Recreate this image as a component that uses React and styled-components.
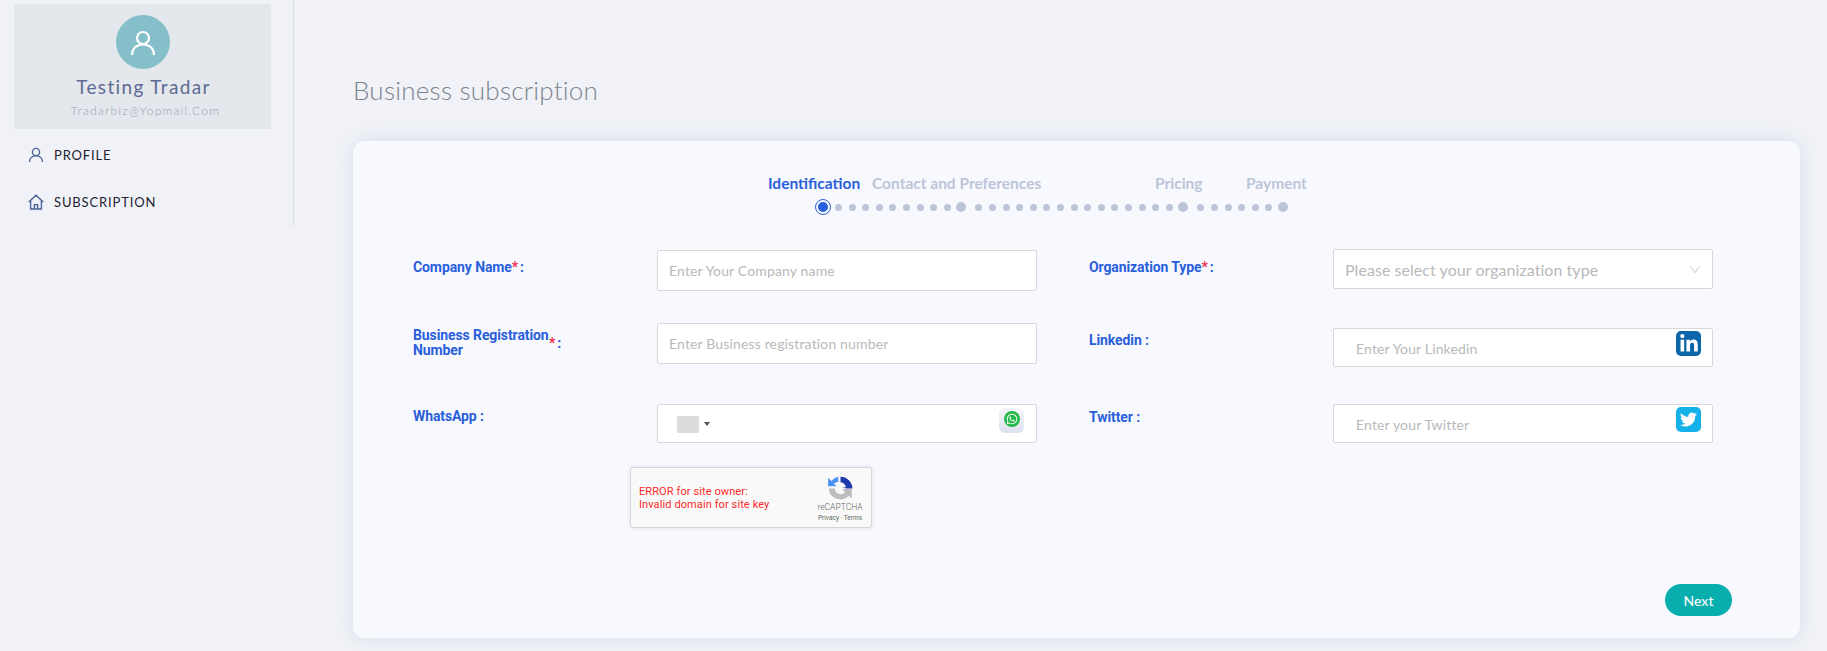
import React from 'react'
import styled, { createGlobalStyle } from 'styled-components'
import { FaWhatsapp, FaLinkedinIn, FaTwitter } from 'react-icons/fa'

const GlobalStyle = createGlobalStyle`
  html, body {
    margin: 0;
    background: #f0f2f7;
    font-family: "Lato", "Open Sans", sans-serif;
  }
  * { box-sizing: border-box; }
`

const Page = styled.div`
  display: flex;
  align-items: flex-start;
  width: 100%;
  height: 651px;
  overflow: hidden;
`

const Sidebar = styled.aside`
  width: 294px;
  height: 226px;
  flex: none;
  padding: 4px 22px 0 14px;
  border-right: 1px solid #d9dde6;
`

const ProfileBox = styled.div`
  height: 125px;
  padding-top: 11px;
  background: #e4e7ec;
  display: flex;
  flex-direction: column;
  align-items: center;
`

const Avatar = styled.div`
  width: 54px;
  height: 54px;
  border-radius: 50%;
  background: #85bfc9;
  display: flex;
  align-items: center;
  justify-content: center;
`

const UserName = styled.div`
  margin: 7px 0 0 2px;
  font-size: 19px;
  line-height: 22px;
  letter-spacing: 1.35px;
  color: #5d6b92;
`

const UserMail = styled.div`
  margin: 5px 0 0 6px;
  font-size: 12px;
  line-height: 15px;
  font-weight: 300;
  letter-spacing: 1.25px;
  color: #98a5b9;
`

const Menu = styled.nav`
  display: flex;
  flex-direction: column;
  gap: 29px;
  padding: 17px 0 0 14px;
`

const MenuItem = styled.a`
  display: flex;
  align-items: center;
  gap: 10px;
  height: 18px;
  font-size: 13px;
  letter-spacing: 0.85px;
  color: #1c2230;
`

const MenuIcon = styled.svg`
  width: 16px;
  height: 16px;
  flex: none;
  fill: none;
  stroke: #4d6496;
  stroke-width: 1.4;
`

const Main = styled.main`
  flex: 1;
  padding: 73px 27px 0 59px;
`

const Title = styled.h1`
  margin: 0 0 33px 0;
  font-size: 26px;
  line-height: 35px;
  font-weight: 300;
  letter-spacing: 0.25px;
  color: #7d838e;
`

const Card = styled.section`
  height: 497px;
  padding: 33px 60px 0;
  background: #f8f9fe;
  border-radius: 12px;
  box-shadow: 0 0 20px rgba(70, 90, 130, 0.13);
  position: relative;
  display: flex;
  flex-direction: column;
`

const StepLabels = styled.div`
  display: grid;
  grid-template-columns: 104px 283px 91px auto;
  padding-left: 355px;
`

const StepLabel = styled.span`
  font-size: 15.5px;
  line-height: 18px;
  font-weight: 700;
  white-space: nowrap;
  color: ${p => (p.$active ? '#2a5fdc' : '#bcc5d8')};
`

const Track = styled.div`
  display: flex;
  align-items: center;
  gap: 9.5px;
  height: 16px;
  margin-top: 7px;
  padding-left: 402px;
`

const Segment = styled.div`
  display: flex;
  align-items: center;
  gap: 6.6px;
`

const Dot = styled.span`
  width: 7px;
  height: 7px;
  border-radius: 50%;
  background: #bcc5d8;
`

const BigDot = styled.span`
  width: 10px;
  height: 10px;
  margin-left: -1.4px;
  border-radius: 50%;
  background: #bcc5d8;
`

const ActiveDot = styled.span`
  width: 16px;
  height: 16px;
  margin-right: -2.6px;
  border-radius: 50%;
  border: 1px solid #2a5fdc;
  display: flex;
  align-items: center;
  justify-content: center;
  &::after {
    content: '';
    width: 10px;
    height: 10px;
    border-radius: 50%;
    background: #2a5fdc;
  }
`

const Columns = styled.div`
  display: grid;
  grid-template-columns: 624px 624px;
  column-gap: 52px;
  margin-top: 35px;
  align-items: start;
`

const Column = styled.div`
  display: flex;
  flex-direction: column;
  margin-top: ${p => p.$top || 0}px;
`

const Row = styled.div`
  display: grid;
  grid-template-columns: 244px 380px;
  margin-top: ${p => p.$top || 0}px;
  height: ${p => p.$h || 39}px;
`

const Label = styled.label`
  display: flex;
  align-items: ${p => (p.$center ? 'center' : 'flex-start')};
  align-self: start;
  gap: 2px;
  padding-top: ${p => p.$pt || 0}px;
  font-family: "Roboto", sans-serif;
  font-size: 14px;
  line-height: 15px;
  font-weight: 700;
  letter-spacing: -0.1px;
  color: #2a5fdc;
`

const LabelText = styled.span`
  width: ${p => (p.$w ? `${p.$w}px` : 'auto')};
  white-space: ${p => (p.$w ? 'normal' : 'nowrap')};
`

const Star = styled.em`
  font-style: normal;
  color: #f0314f;
  margin-left: -2px;
`

const FieldBox = styled.div`
  position: relative;
  height: 100%;
  background: #fff;
  border: 1px solid #d6d8dc;
  border-radius: 2px;
`

const TextInput = styled.input`
  width: 100%;
  height: 100%;
  padding: ${p => (p.$shift ? 1 : 0)}px ${p => (p.$wide ? 40 : 12)}px 0 ${p => (p.$wide ? 22 : 11)}px;
  border: 0;
  outline: 0;
  background: transparent;
  font-family: "Lato", sans-serif;
  font-size: 14px;
  letter-spacing: 0.15px;
  color: #333;
  &::placeholder {
    color: #b9b9bb;
    opacity: 1;
  }
`

const SelectBox = styled.div`
  height: 100%;
  padding: 0 12px 0 11px;
  display: flex;
  align-items: center;
  justify-content: space-between;
  font-size: 16px;
  letter-spacing: 0.05px;
  color: #b9b9bb;
`

const Flag = styled.span`
  position: absolute;
  left: 19px;
  top: 11px;
  width: 22px;
  height: 17px;
  border-radius: 1px;
  background: #dcdcdc;
`

const FlagArrow = styled.span`
  position: absolute;
  left: 46px;
  top: 17px;
  border-left: 3px solid transparent;
  border-right: 3px solid transparent;
  border-top: 4px solid #555;
`

const SocialTile = styled.span`
  position: absolute;
  right: 11px;
  top: 2px;
  width: 25px;
  height: 25px;
  border-radius: 5px;
  display: flex;
  align-items: center;
  justify-content: center;
  background: ${p => p.$bg};
  color: #fff;
  font-size: ${p => p.$size}px;
`

const WhatsAppTile = styled.span`
  position: absolute;
  right: 12px;
  top: 3px;
  width: 25px;
  height: 25px;
  border-radius: 6px;
  display: flex;
  align-items: center;
  justify-content: center;
  background: linear-gradient(#f4f5f8, #dde2ee);
`

const WhatsAppDisc = styled.span`
  width: 16px;
  height: 16px;
  margin-top: -3px;
  border-radius: 50%;
  background: #25b84a;
  color: #fff;
  display: flex;
  align-items: center;
  justify-content: center;
  font-size: 12px;
`

const Captcha = styled.div`
  width: 242px;
  height: 61px;
  margin: 24px 0 0 217px;
  padding: 0 0 0 8px;
  background: #f9f9f9;
  border: 1px solid #d6d6d6;
  border-radius: 3px;
  box-shadow: 0 0 4px rgba(0, 0, 0, 0.1);
  display: flex;
  align-items: center;
  justify-content: space-between;
  font-family: "Roboto", sans-serif;
`

const CaptchaError = styled.div`
  font-size: 11px;
  line-height: 13px;
  letter-spacing: 0.1px;
  color: #fa2a2a;
`

const CaptchaBrand = styled.div`
  width: 62px;
  display: flex;
  flex-direction: column;
  align-items: center;
  margin-top: 3px;
  color: #666;
`

const BrandName = styled.div`
  font-size: 8.5px;
  line-height: 11px;
  font-weight: 300;
`

const BrandLinks = styled.div`
  font-size: 6.5px;
  line-height: 10px;
`

const NextButton = styled.button`
  position: absolute;
  right: 68px;
  bottom: 22px;
  width: 67px;
  height: 32px;
  border: 0;
  border-radius: 16px;
  background: #08adad;
  color: #fff;
  font-family: "Lato", sans-serif;
  font-size: 14px;
  font-weight: 500;
`

const dots = n => Array.from({ length: n }, (_, i) => <Dot key={i} />)

const App = () => {
  return (
    <Page>
      <GlobalStyle />
      <Sidebar>
        <ProfileBox>
          <Avatar>
            <svg width="26" height="28" viewBox="0 0 26 28" fill="none" stroke="#fff" strokeWidth="2.2">
              <circle cx="13" cy="10" r="6" />
              <path d="M2 27c0-6.500 4.500-10.500 11-10.500S24 20.500 24 27" />
            </svg>
          </Avatar>
          <UserName>Testing Tradar</UserName>
          <UserMail>Tradarbiz@Yopmail.Com</UserMail>
        </ProfileBox>
        <Menu>
          <MenuItem>
            <MenuIcon viewBox="0 0 16 16">
              <circle cx="8" cy="5" r="3.600" />
              <path d="M1.500 15c0-3.800 2.800-6.200 6.500-6.200s6.500 2.400 6.500 6.200" />
            </MenuIcon>
            PROFILE
          </MenuItem>
          <MenuItem>
            <MenuIcon viewBox="0 0 16 16">
              <path d="M.8 8 8 1.200 15.200 8M2.600 6.800V15h10.800V6.800M6.400 15v-4.400h3.200V15" />
            </MenuIcon>
            SUBSCRIPTION
          </MenuItem>
        </Menu>
      </Sidebar>

      <Main>
        <Title>Business subscription</Title>
        <Card>
          <StepLabels>
            <StepLabel $active>Identification</StepLabel>
            <StepLabel>Contact and Preferences</StepLabel>
            <StepLabel>Pricing</StepLabel>
            <StepLabel>Payment</StepLabel>
          </StepLabels>
          <Track>
            <Segment>
              <ActiveDot />
              {dots(9)}
              <BigDot />
            </Segment>
            <Segment>
              {dots(15)}
              <BigDot />
            </Segment>
            <Segment>
              {dots(6)}
              <BigDot />
            </Segment>
          </Track>

          <Columns>
            <Column>
              <Row $h={41}>
                <Label $pt={10}>
                  <LabelText>Company Name</LabelText>
                  <Star>*</Star> :
                </Label>
                <FieldBox>
                  <TextInput placeholder="Enter Your Company name" />
                </FieldBox>
              </Row>
              <Row $top={32} $h={41}>
                <Label $pt={5} $center>
                  <LabelText $w={136}>Business Registration Number</LabelText>
                  <Star>*</Star> :
                </Label>
                <FieldBox>
                  <TextInput placeholder="Enter Business registration number" />
                </FieldBox>
              </Row>
              <Row $top={40}>
                <Label $pt={5}>WhatsApp :</Label>
                <FieldBox>
                  <Flag />
                  <FlagArrow />
                  <WhatsAppTile>
                    <WhatsAppDisc>
                      <FaWhatsapp />
                    </WhatsAppDisc>
                  </WhatsAppTile>
                </FieldBox>
              </Row>
              <Captcha>
                <CaptchaError>
                  ERROR for site owner:
                  <br />
                  Invalid domain for site key
                </CaptchaError>
                <CaptchaBrand>
                  <svg width="27" height="27" viewBox="0 0 24 24">
                    <path d="M12 1.500A10.500 10.500 0 0 0 3.900 5.300L1 2.500V10h7.500L6 7.500A7 7 0 0 1 10 6.200V1.700z" fill="#4a90f5" />
                    <path d="M12 1.500a10.500 10.500 0 0 1 10.500 10.500H17A5.500 5.500 0 0 0 12 6.500zM14 11l9-1-1 1.500-5 .5z" fill="#1c3aa9" />
                    <path d="M1.500 12H7a5 5 0 0 0 9 3l-2.500-2.500H22V21l-2.500-2.500A10.500 10.500 0 0 1 1.500 12z" fill="#bdbdbd" />
                  </svg>
                  <BrandName>reCAPTCHA</BrandName>
                  <BrandLinks>Privacy · Terms</BrandLinks>
                </CaptchaBrand>
              </Captcha>
            </Column>

            <Column $top={-1}>
              <Row $h={40}>
                <Label $pt={11}>
                  <LabelText>Organization Type</LabelText>
                  <Star>*</Star> :
                </Label>
                <FieldBox>
                  <SelectBox>
                    Please select your organization type
                    <svg width="10" height="7" viewBox="0 0 10 7" fill="none" stroke="#b9b9bb" strokeWidth="0.8">
                      <path d="M.5.5 5 6.500 9.500.5" />
                    </svg>
                  </SelectBox>
                </FieldBox>
              </Row>
              <Row $top={39}>
                <Label $pt={5}>Linkedin :</Label>
                <FieldBox>
                  <TextInput $wide $shift placeholder="Enter Your Linkedin" />
                  <SocialTile $bg="#0a66a8" $size={20}>
                    <FaLinkedinIn />
                  </SocialTile>
                </FieldBox>
              </Row>
              <Row $top={37}>
                <Label $pt={6}>Twitter :</Label>
                <FieldBox>
                  <TextInput $wide $shift placeholder="Enter your Twitter" />
                  <SocialTile $bg="#14b1ea" $size={17}>
                    <FaTwitter />
                  </SocialTile>
                </FieldBox>
              </Row>
            </Column>
          </Columns>
          <NextButton>Next</NextButton>
        </Card>
      </Main>
    </Page>
  )
}

export default App
